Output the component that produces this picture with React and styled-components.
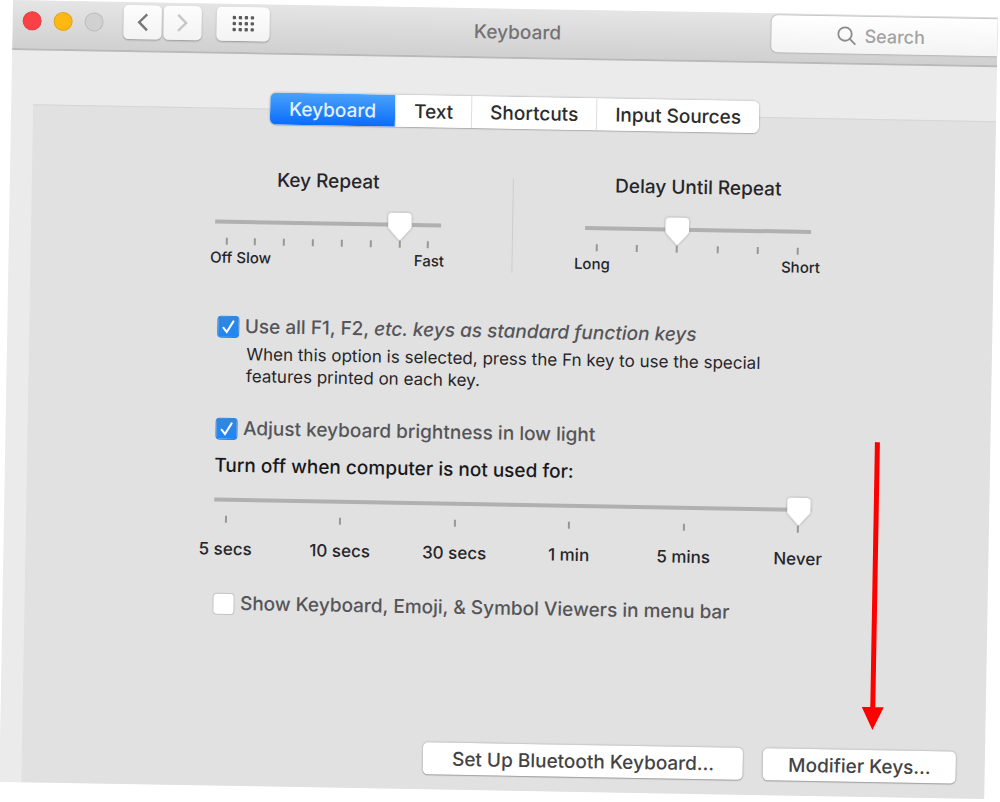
import React, { useState } from 'react';
import styled, { createGlobalStyle, css } from 'styled-components';

const GlobalStyle = createGlobalStyle`
  * {
    box-sizing: border-box;
  }

  body {
    min-height: 100vh;
    margin: 0;
    background: #fff;
    overflow: hidden;
  }

  body, button, input {
    font-family: Inter, "Liberation Sans", sans-serif;
    font-weight: 500;
  }
`;

const Window = styled.div`
  display: flex;
  flex-direction: column;
  min-height: calc(100vh - 20px);
  margin: 0 2px 0 13px;
  background: #ebebeb;
  color: #26262a;
  overflow: hidden;
  transform: rotate(1deg);
  transform-origin: 0 0;
`;

const TitleBar = styled.header`
  display: flex;
  align-items: center;
  height: 50px;
  padding: 0 0 8px 10px;
  background: linear-gradient(#e6e5e6, #d0d0d0);
  border-bottom: 2px solid #b9b9b9;
`;

const Lights = styled.div`
  display: flex;
  gap: 12px;
`;

const Light = styled.button`
  width: 19px;
  height: 19px;
  padding: 0;
  border: 1px solid ${props => props.$edge};
  border-radius: 50%;
  background: ${props => props.$color};
`;

const ToolGroup = styled.div`
  display: flex;
  gap: 2px;
  margin-left: ${props => props.$space};
`;

const ToolButton = styled.button`
  display: flex;
  align-items: center;
  justify-content: center;
  width: ${props => (props.$wide ? '53px' : '38px')};
  height: 34px;
  padding: 0;
  border: 0;
  border-radius: 5px;
  background: linear-gradient(#fdfdfd, #f3f3f3);
  box-shadow: 0 1px 2px rgba(0, 0, 0, 0.3);
`;

const Title = styled.h1`
  flex: 1;
  margin: 8px 0 0;
  padding-right: 6px;
  color: #747274;
  font-size: 19px;
  font-weight: 500;
  line-height: 24px;
  text-align: center;
`;

const SearchBox = styled.label`
  display: flex;
  align-items: center;
  gap: 8px;
  width: 226px;
  height: 37px;
  padding: 2px 0 0 65px;
  border-radius: 6px 0 0 6px;
  background: linear-gradient(#fff, #f3f3f3);
  box-shadow: 0 0 2px rgba(0, 0, 0, 0.45);
`;

const SearchInput = styled.input`
  flex: 1;
  min-width: 0;
  padding: 0;
  border: 0;
  background: transparent;
  font-size: 18px;

  &::placeholder {
    color: #a2a2a2;
    opacity: 1;
  }
`;

const Panel = styled.main`
  flex: 1;
  display: flex;
  flex-direction: column;
  align-items: center;
  margin: 54px 0 0 22px;
  background: #e1e1e1;
  border-top: 1px solid #d6d6d6;
`;

const Tabs = styled.nav`
  display: flex;
  margin-top: -17px;
  border-radius: 6px;
  background: #fff;
  box-shadow: 0 0 2px rgba(0, 0, 0, 0.35), 0 1px 1px rgba(0, 0, 0, 0.15);
  overflow: hidden;
`;

const Tab = styled.button`
  height: 32px;
  padding: 0 18px;
  border: 0;
  border-left: 1px solid #dedede;
  background: #fff;
  color: #2c2c2c;
  font-size: 19px;

  ${props => props.$active && css`
    padding: 0 19px;
    border-left: 0;
    background: linear-gradient(#4aa2fb, #0a6cfa);
    color: #e4f1ff;
  `}
`;

const Form = styled.form`
  width: 100%;
  max-width: 600px;
  margin-top: 44px;
`;

const SpeedRow = styled.div`
  display: flex;
  justify-content: space-between;
  padding: 0 2px;
`;

const Speed = styled.div`
  width: 226px;
`;

const SpeedLabel = styled.label`
  display: block;
  margin-bottom: 18px;
  font-size: 19px;
  line-height: 24px;
  text-align: center;
`;

const Divider = styled.div`
  width: 1px;
  height: 94px;
  margin-top: 6px;
  background: #cdcdcd;
`;

const Track = styled.div`
  display: flex;
  height: 28px;
  background: linear-gradient(#b0b0b0, #b0b0b0) 0 10px / 100% 4px no-repeat;
`;

const Range = styled.input`
  appearance: none;
  width: 100%;
  height: 28px;
  margin: 0;
  background: transparent;
  filter: drop-shadow(0 0 1px #8c8c8c);

  &::-webkit-slider-runnable-track {
    height: 28px;
  }

  &::-webkit-slider-thumb {
    appearance: none;
    width: 24px;
    height: 27px;
    background: #fff;
    clip-path: polygon(0 3px, 1px 1px, 3px 0, 21px 0, 23px 1px, 24px 3px, 24px 14px, 23px 16px, 13px 27px, 11px 27px, 1px 16px, 0 14px);
  }
`;

const Ticks = styled.div`
  display: flex;
  justify-content: space-between;
  padding: 0 11px;
`;

const Tick = styled.span`
  width: 2px;
  height: 7px;
  background: #979797;
`;

const Ends = styled.div`
  display: flex;
  justify-content: space-between;
  margin: 3px -${props => props.$bleed} 0;
  font-size: 15px;
  line-height: 20px;
`;

const Options = styled.div`
  margin-right: -3px;
  padding-left: 6px;
`;

const CheckRow = styled.label`
  display: flex;
  align-items: center;
  gap: 6px;
  margin-top: ${props => props.$space};
  color: #555559;
  font-size: 19px;
  line-height: 24px;
  white-space: nowrap;
`;

const Check = styled.input`
  appearance: none;
  flex: none;
  width: 22px;
  height: 22px;
  margin: 0;
  border: 1px solid #c4c4c4;
  border-radius: 4px;
  background: #fff;

  &:checked {
    border-color: #2b83dd;
    background: linear-gradient(#3287dc, #1f86f8);
  }
`;

// the tick mark sits in the same grid cell as its box
const CheckCell = styled.span`
  display: grid;
  flex: none;

  > * {
    grid-area: 1 / 1;
  }

  svg {
    pointer-events: none;
  }
`;

const Note = styled.p`
  width: 550px;
  margin: 4px 0 0 30px;
  font-size: 17px;
  font-weight: 400;
  line-height: 22px;
`;

const TimerLabel = styled.label`
  display: block;
  margin: 13px 0 10px;
  color: #19191b;
  font-size: 19px;
  line-height: 24px;
`;

const TimerMarks = styled.div`
  display: grid;
  grid-template-columns: repeat(6, 1fr);
  margin: 16px -45px 0;
  font-size: 17px;
  line-height: 20px;
  text-align: center;
`;

const Footer = styled.footer`
  display: flex;
  align-self: stretch;
  justify-content: flex-end;
  gap: 20px;
  margin-top: auto;
  padding: 0 29px 15px 0;
`;

const ButtonWrap = styled.div`
  position: relative;
`;

const PushButton = styled.button`
  height: 32px;
  padding: 0 ${props => props.$pad};
  border: 0;
  border-radius: 5px;
  background: #fff;
  box-shadow: 0 0 2px rgba(0, 0, 0, 0.35), 0 1px 1px rgba(0, 0, 0, 0.2);
  color: #434346;
  font-size: 19px;
`;

const Arrow = styled.svg`
  position: absolute;
  left: 98px;
  bottom: calc(100% + 20px);
`;

const tabs = ['Keyboard', 'Text', 'Shortcuts', 'Input Sources'];
const timers = ['5 secs', '10 secs', '30 secs', '1 min', '5 mins', 'Never'];

function Slider({ id, steps, start }) {
  const [value, setValue] = useState(start);
  return (
    <>
      <Track>
        <Range
          id={id}
          type="range"
          min="0"
          max={steps - 1}
          value={value}
          onChange={e => setValue(e.target.value)}
        />
      </Track>
      <Ticks>
        {Array.from({ length: steps }, (_, i) => <Tick key={i} />)}
      </Ticks>
    </>
  );
}

function Checkbox({ space, start, children }) {
  const [checked, setChecked] = useState(start);
  return (
    <CheckRow $space={space}>
      <CheckCell>
        <Check type="checkbox" checked={checked} onChange={() => setChecked(!checked)} />
        {checked && (
          <svg width="22" height="22" viewBox="0 0 22 22" fill="none" stroke="#fff" strokeWidth="2" strokeLinecap="round">
            <path d="M6 12l3.5 4.2L16 5.5" />
          </svg>
        )}
      </CheckCell>
      <span>{children}</span>
    </CheckRow>
  );
}

function Chevron({ d, color }) {
  return (
    <svg width="14" height="20" viewBox="0 0 14 20" fill="none" stroke={color} strokeWidth="2.4">
      <path d={d} />
    </svg>
  );
}

function GridIcon() {
  return (
    <svg width="24" height="18" viewBox="0 0 24 18" fill="#5c5c5c">
      {[1, 7, 13].map(y =>
        [1, 7, 13, 19].map(x => <rect key={`${x}-${y}`} x={x} y={y} width="3.4" height="3.4" rx="1" />)
      )}
    </svg>
  );
}

function App() {
  const [active, setActive] = useState('Keyboard');

  return (
    <>
      <GlobalStyle />
      <Window>
        <TitleBar>
          <Lights>
            <Light aria-label="Close" $color="#fc4146" $edge="#df3d40" />
            <Light aria-label="Minimize" $color="#fdb912" $edge="#dfa023" />
            <Light aria-label="Zoom" $color="#d2d1d2" $edge="#bdbcbd" />
          </Lights>
          <ToolGroup $space="20px">
            <ToolButton aria-label="Back">
              <Chevron d="M11.5 2L3.5 10l8 8" color="#777" />
            </ToolButton>
            <ToolButton aria-label="Forward">
              <Chevron d="M2.5 2l8 8-8 8" color="#c6c6c6" />
            </ToolButton>
          </ToolGroup>
          <ToolGroup $space="15px">
            <ToolButton $wide aria-label="Show All">
              <GridIcon />
            </ToolButton>
          </ToolGroup>
          <Title>Keyboard</Title>
          <SearchBox>
            <svg width="20" height="20" viewBox="0 0 20 20" fill="none" stroke="#8c8c8c" strokeWidth="1.8" strokeLinecap="round">
              <circle cx="8.5" cy="8.5" r="6.7" />
              <path d="M13.5 13.5l5 5" />
            </svg>
            <SearchInput type="text" placeholder="Search" aria-label="Search" />
          </SearchBox>
        </TitleBar>

        <Panel>
          <Tabs>
            {tabs.map(name =>
              <Tab key={name} $active={name === active} onClick={() => setActive(name)}>{name}</Tab>
            )}
          </Tabs>

          <Form>
            <SpeedRow>
              <Speed>
                <SpeedLabel htmlFor="repeat">Key Repeat</SpeedLabel>
                <Slider id="repeat" steps={8} start={6} />
                <Ends $bleed="4px"><span>Off Slow</span><span>Fast</span></Ends>
              </Speed>
              <Divider />
              <Speed>
                <SpeedLabel htmlFor="delay">Delay Until Repeat</SpeedLabel>
                <Slider id="delay" steps={6} start={2} />
                <Ends $bleed="10px"><span>Long</span><span>Short</span></Ends>
              </Speed>
            </SpeedRow>

            <Options>
              <Checkbox space="47px" start={true}>
                Use all F1, F2, <em>etc. keys as standard function keys</em>
              </Checkbox>
              <Note>
                When this option is selected, press the Fn key to use the special
                features printed on each key.
              </Note>
              <Checkbox space="30px" start={true}>Adjust keyboard brightness in low light</Checkbox>
              <TimerLabel htmlFor="timer">Turn off when computer is not used for:</TimerLabel>
              <Slider id="timer" steps={6} start={5} />
              <TimerMarks>
                {timers.map(text => <span key={text}>{text}</span>)}
              </TimerMarks>
              <Checkbox space="33px" start={false}>Show Keyboard, Emoji, &amp; Symbol Viewers in menu bar</Checkbox>
            </Options>
          </Form>

          <Footer>
            <PushButton $pad="29px">Set Up Bluetooth Keyboard…</PushButton>
            <ButtonWrap>
              <PushButton $pad="25px">Modifier Keys…</PushButton>
              <Arrow width="22" height="288" viewBox="0 0 22 288" fill="#fe0000">
                <path d="M8.5 0h5v265H22L11 288 0 265h8.5z" />
              </Arrow>
            </ButtonWrap>
          </Footer>
        </Panel>
      </Window>
    </>
  );
}

export default App;
